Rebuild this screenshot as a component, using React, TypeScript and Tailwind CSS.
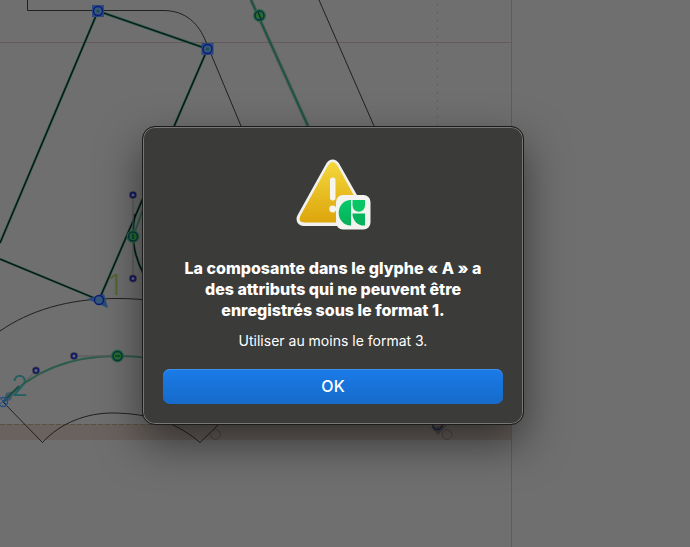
import React from 'react';

const Handle: React.FC<{ x: number; y: number }> = ({ x, y }) => (
  <g>
    <circle cx={x} cy={y} r={4} fill="#524f4b" />
    <circle cx={x} cy={y} r={2.4} fill="#66677c" stroke="#131a66" strokeWidth={1.8} />
  </g>
);

const SmoothNode: React.FC<{ x: number; y: number }> = ({ x, y }) => (
  <g>
    <circle cx={x} cy={y} r={6.5} fill="#28683f" />
    <circle cx={x} cy={y} r={4.5} fill="#256b36" stroke="#0d3148" strokeWidth={1.4} />
  </g>
);

const CornerNode: React.FC<{ x: number; y: number }> = ({ x, y }) => (
  <g>
    <rect x={x - 6} y={y - 6} width={12} height={12} fill="#294a7e" />
    <circle cx={x} cy={y} r={4.5} fill="#35577a" stroke="#0c1a7d" strokeWidth={1.4} />
    <circle cx={x} cy={y} r={1.5} fill="#1d4a52" />
  </g>
);

const GlyphCanvas: React.FC = () => (
  <svg
    className="absolute inset-0 h-full w-full"
    viewBox="0 0 690 547"
    preserveAspectRatio="xMidYMid slice"
    fill="none"
    aria-hidden="true"
  >
    {/* metrics */}
    <rect x={0} y={424} width={512} height={16} fill="#69625e" />
    <path d="M0 424.5H512" stroke="#5b5142" strokeDasharray="5 2" />
    <path d="M0 42.5H512" stroke="#635a59" />
    <path d="M511.500 0V547" stroke="#5f5d56" />
    <path d="M437.5 4V424" stroke="#5f5f5f" strokeDasharray="2 6" />

    {/* outline */}
    <g stroke="#202020" strokeWidth={1}>
      <path d="M27.500 0V10.500H163C186 10.500 199 24 206 42L241 126" />
      <path d="M319 0L374 126" />
      <path d="M0 331C29 311 67 298.500 117 298.500C128 298.500 137 299 147 300" />
      <path d="M3 402L42.500 442.500C61 422 88 413 112 413C152 413 180 425 200 442.500L219 424" />
    </g>

    {/* components */}
    <path d="M251 0L308 126" stroke="#555562" strokeWidth={4} strokeOpacity={0.5} />
    <path d="M251 0L308 126" stroke="#1f5540" strokeWidth={2.2} />
    <path d="M133 237L148 195" stroke="#316047" strokeWidth={2} />
    <g stroke="#27554b" strokeWidth={2.4} strokeLinejoin="round">
      <path d="M0 243L98 11L207.500 49L99 300L0 259" />
      <path d="M135 214C131 236 133 254 144 275" />
    </g>
    <g stroke="#04160f" strokeWidth={1.2} strokeLinejoin="round">
      <path d="M0 243L98 11L207.500 49L99 300L0 259" />
      <path d="M135 214C131 236 133 254 144 275" />
    </g>
    <path d="M3 402C33 370 72 356 117 356C128 356 136 356 146 358" stroke="#2c5c4a" strokeWidth={2.2} />
    <path d="M4 401L36 371M74 356H117M133 195V278" stroke="#56565b" strokeWidth={1} />

    {/* start points */}
    <path d="M87 299L108 308L104 294Z" fill="#284b79" />
    <circle cx={99} cy={300} r={4.5} fill="#35577a" stroke="#0c1a7d" strokeWidth={1.4} />
    <path d="M3 402L6 393L14 391L11 400Z" fill="#40586a" />
    <path d="M3 402L19 386" stroke="#194f43" strokeWidth={1.8} />
    <circle cx={3} cy={402} r={4.500} stroke="#204f87" strokeWidth={1.4} />
    <path d="M0 398L6 404M0 404L6 399" stroke="#204f87" strokeWidth={1} />

    <CornerNode x={98} y={11} />
    <CornerNode x={207.500} y={49} />
    <SmoothNode x={259.500} y={15.500} />
    <SmoothNode x={133} y={236.500} />
    <SmoothNode x={117.500} y={356} />
    <path d="M258 12L261 19M133 234V239M115 356H120" stroke="#092a18" strokeWidth={1.2} />
    <Handle x={133} y={195} />
    <Handle x={133} y={278.500} />
    <Handle x={36} y={370.500} />
    <Handle x={74} y={356} />

    <path d="M431 427L438 435L447 425" fill="#514a45" />
    <circle cx={437.500} cy={425} r={4.500} stroke="#152a5d" strokeWidth={1.5} />
    <circle cx={215.500} cy={434.500} r={4.800} stroke="#4e4a48" />
    <circle cx={447} cy={434.500} r={4.800} stroke="#4e4a48" />

    <g className="font-['Inter'] text-[28px] font-light">
      <text x={109} y={295} fill="#53652f">1</text>
      <text x={11} y={396} fill="#235e60">2</text>
    </g>
  </svg>
);

const WarningIcon: React.FC = () => (
  <svg className="h-[72px] w-[76px]" viewBox="0 0 76 72" fill="none" aria-hidden="true">
    <defs>
      <linearGradient id="warn" x1="0" y1="0" x2="0" y2="1">
        <stop offset="0" stopColor="#f3d83c" />
        <stop offset="1" stopColor="#dda50c" />
      </linearGradient>
      <linearGradient id="leaf" x1="0" y1="0" x2="0" y2="1">
        <stop offset="0" stopColor="#09c968" />
        <stop offset="1" stopColor="#05af59" />
      </linearGradient>
    </defs>
    <path
      d="M37.700 7.500L67.500 60H8.500Z"
      fill="#f1f1ef"
      stroke="#f1f1ef"
      strokeWidth={14}
      strokeLinejoin="round"
    />
    <path
      d="M33.300 6Q37.700 0 42.100 6L70 56.500Q73 63.500 66 63.500H9.500Q2.500 63.500 5.500 56.500Z"
      fill="url(#warn)"
    />
    <rect x={35} y={18.500} width={5.500} height={23} rx={2.700} fill="#f8f6ec" />
    <circle cx={37.700} cy={50} r={3.400} fill="#f8f6ec" />
    <rect x={41} y={36} width={34.500} height={34.500} rx={7} fill="#f3f4ef" />
    <path d="M56 41V66.500H55.500A11.800 12.750 0 0 1 55.500 41Z" fill="url(#leaf)" />
    <path d="M57.500 41H70V46.500A6.250 6.250 0 0 1 57.500 46.500Z" fill="#08c566" />
    <path d="M57.500 54.500H70V66.500H69A11.500 11.500 0 0 1 57.500 55Z" fill="#05b45c" />
  </svg>
);

const App: React.FC = () => {
  return (
    <div className="relative flex min-h-screen items-start justify-center overflow-hidden bg-[#6f6f6f] pt-[126px] pr-6">
      <GlyphCanvas />
      <div
        role="alertdialog"
        aria-modal="true"
        aria-labelledby="alert-title"
        aria-describedby="alert-message"
        className="relative flex w-full max-w-[382px] flex-col items-center rounded-[13px] border border-[#1b1b1b] bg-[#3b3b39] px-5 pt-8 pb-5 text-center font-['Inter',sans-serif] text-white shadow-[inset_0_0_0_1px_#777775,0_18px_44px_rgba(0,0,0,0.5)]"
      >
        <WarningIcon />
        <h1 id="alert-title" className="mt-[27px] max-w-[320px] text-[16px] leading-[21px] font-extrabold">
          La composante dans le glyphe «&nbsp;A&nbsp;» a des attributs qui ne peuvent être enregistrés sous le format&nbsp;1.
        </h1>
        <p id="alert-message" className="mt-[10px] text-[14px] leading-5">
          Utiliser au moins le format 3.
        </p>
        <button
          type="button"
          className="mt-[18px] h-[35px] w-full rounded-[7px] bg-linear-to-b from-[#1a7be8] to-[#166bca] pb-px text-[16px] leading-5 font-medium shadow-[inset_0_1px_0_#3d90eb]"
        >
          OK
        </button>
      </div>
    </div>
  );
};

export default App;
